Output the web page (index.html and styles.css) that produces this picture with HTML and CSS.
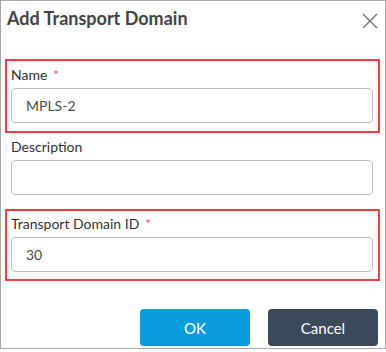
FILE: index.html
```html
<!DOCTYPE html>
<html>
<head>
<meta charset="utf-8">
<title>Add Transport Domain</title>
<link rel="stylesheet" href="styles.css">
</head>
<body>

<div class="dialog">

  <div class="header">
    <h1 class="title">Add Transport Domain</h1>
    <span class="close">
      <svg width="16" height="16" viewBox="0 0 16 16"><path d="M1 1 L15 15 M15 1 L1 15" stroke="#707070" stroke-width="1.4" fill="none"/></svg>
    </span>
  </div>

  <div class="form">
    <div class="field marked first">
      <label class="label">Name <span class="req">*</span></label>
      <div class="input">MPLS-2</div>
    </div>

    <div class="field plain">
      <label class="label">Description</label>
      <div class="input"></div>
    </div>

    <div class="field marked second">
      <label class="label">Transport Domain ID <span class="req">*</span></label>
      <div class="input">30</div>
    </div>
  </div>

  <div class="buttons">
    <button class="btn ok">OK</button>
    <button class="btn cancel">Cancel</button>
  </div>

</div>

</body>
</html>
```

FILE: styles.css
```css
body { margin: 0; background: #fff; }

.dialog {
  width: 386px;
  height: 349px;
  box-sizing: border-box;
  border: 1px solid #a9a9a9;
  font-family: Lato, "Open Sans", sans-serif;
  color: #333;
  display: flex;
  flex-direction: column;
}

.header { display: flex; justify-content: space-between; align-items: flex-start; height: 58px; padding: 7px 7px 0 6px; box-sizing: border-box; }
.title { margin: 0; font-size: 18px; font-weight: 700; color: #444; line-height: 20px; }
.close { margin-top: 5px; }

.form { margin: 0 5px 0 4px; }
.field { display: flex; flex-direction: column; gap: 5px; }
.field.marked { border: 2px solid #ee3f44; padding: 5px 5px 8px 4px; }
.field.plain { padding: 5px 7px 0 6px; }
.field.second { margin-top: 14px; padding-top: 4px; padding-bottom: 7px; }

.label { font-size: 14px; line-height: 17px; color: #333; }
.req { color: #f0606a; margin-left: 2px; }

.input {
  height: 35px;
  box-sizing: border-box;
  border: 1px solid #bdbdbd;
  border-radius: 4px;
  padding: 0 14px;
  font-size: 14px;
  line-height: 33px;
  color: #4a4a4a;
}

.buttons { display: flex; justify-content: flex-end; gap: 18px; margin-top: 28px; padding-right: 7px; }
.btn {
  width: 110px;
  height: 37px;
  border: none;
  border-radius: 4px;
  color: #fff;
  font-family: Lato, "Open Sans", sans-serif;
  font-size: 15px;
}
.btn.ok { background: #0a9ddb; }
.btn.cancel { background: #3b4a5a; }
```
